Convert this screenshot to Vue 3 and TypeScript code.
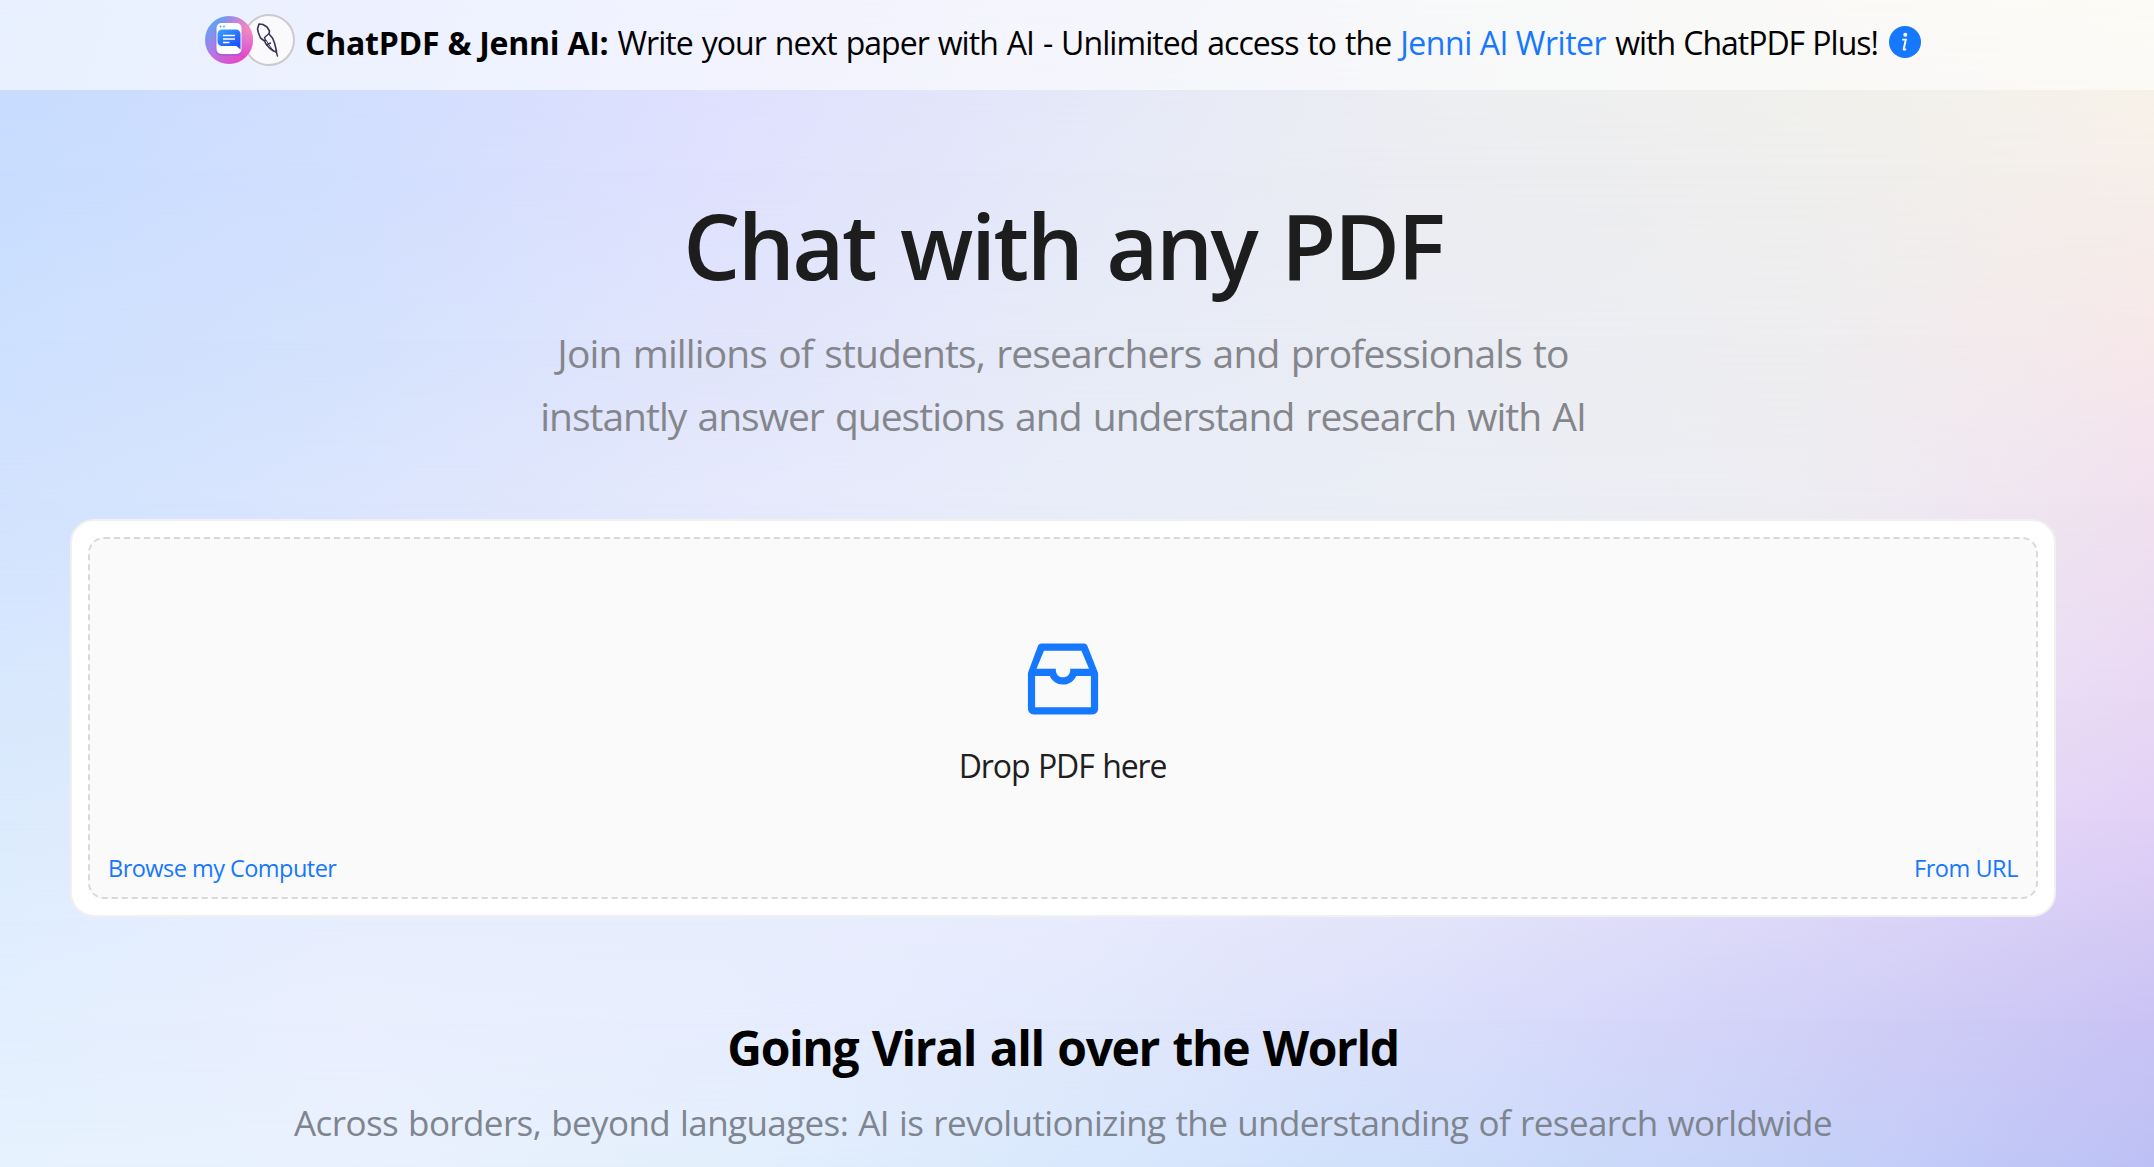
<script setup lang="ts">
interface Band { y: number; colors: string[] }

// Rows of the page's colour mesh; columns are spread evenly from left to right.
const bands: Band[] = [
  { y: 0, colors: ['#c6dbff', '#d2ddfe', '#dee0fe', '#e5e7f9', '#edeff2', '#f2f1ec', '#f7f5e8'] },
  { y: 170, colors: ['#c8ddff', '#d2dffe', '#dfe1fe', '#e6e9f8', '#ecedf1', '#efefee', '#f6efe9'] },
  { y: 340, colors: ['#cde1fe', '#d5e2fd', '#e1e5fc', '#e7ebf7', '#ebedf4', '#eeeef0', '#f7e8ea'] },
  { y: 500, colors: ['#d2e3fe', '#dbe5fd', '#e5e9fc', '#e8edf9', '#ebeef5', '#ededf2', '#f1e1ef'] },
  { y: 700, colors: ['#d9e8fd', '#e0e8fd', '#e7ebfd', '#e8edfb', '#e9ebf8', '#ebe6f6', '#e9d8f4'] },
  { y: 820, colors: ['#dcebfd', '#e5ebfe', '#e9edfe', '#e8edfc', '#e8e8fb', '#e6dff8', '#e2d0f6'] },
  { y: 920, colors: ['#dfedfe', '#e8eefe', '#e8eefe', '#e7ebfc', '#e3e3fb', '#dcd8f8', '#d5caf5'] },
  { y: 1020, colors: ['#e3effe', '#eaeffe', '#e8eefe', '#e2e9fc', '#dadffb', '#d2d1f8', '#cac3f4'] },
  { y: 1167, colors: ['#e6f2fe', '#e9f1fe', '#e3effc', '#d9e8fd', '#cfdefa', '#c6d2f8', '#bcc0f5'] },
]

const bandStyle = (i: number) => {
  const fade = i === 0
    ? 'none'
    : `linear-gradient(transparent ${bands[i - 1].y}px, #000 ${bands[i].y}px)`
  return {
    backgroundImage: `linear-gradient(90deg, ${bands[i].colors.join(', ')})`,
    maskImage: fade,
  }
}
</script>

<template>
  <div class="page">
    <div class="backdrop">
      <div v-for="(band, i) in bands" :key="band.y" class="band" :style="bandStyle(i)"></div>
    </div>

    <header class="banner">
      <svg class="logos" width="92" height="54" viewBox="0 0 92 54">
        <defs>
          <linearGradient id="badge" x1="0.1" y1="0.1" x2="0.8" y2="0.9">
            <stop offset="0" stop-color="#56a8f5" />
            <stop offset="0.5" stop-color="#b478e4" />
            <stop offset="1" stop-color="#e845c8" />
          </linearGradient>
          <radialGradient id="glow" cx="0.95" cy="0.25" r="0.6">
            <stop offset="0" stop-color="#fb8bbb" />
            <stop offset="1" stop-color="#f080cc" stop-opacity="0" />
          </radialGradient>
          <linearGradient id="bubble" x1="0" y1="0" x2="0.7" y2="1">
            <stop offset="0" stop-color="#37a5ff" />
            <stop offset="1" stop-color="#1d4cff" />
          </linearGradient>
        </defs>
        <circle cx="65" cy="27" r="25" fill="#fafafd" stroke="#cbcbcb" stroke-width="2" />
        <g fill="none" stroke="#3b3358" stroke-width="1.600" stroke-linejoin="round" stroke-linecap="round">
          <path d="M55 11l4 .5 4 2.500 2.500 4-.5 3 3.500 4 2 5 1.500 6 .5 3-3-1-4-3-3.500-4-1.500-3-4-3-2-5-1-4z" />
          <path d="M64.500 21l-4 3.500 1 3M66.500 30l-4 2M72 38l1.500 5" stroke-width="1.400" />
          <path d="M62 27l3 5 3 4 3 3" stroke-width="1" />
        </g>
        <circle cx="25" cy="27" r="24" fill="url(#badge)" />
        <circle cx="25" cy="27" r="24" fill="url(#glow)" />
        <rect x="11.500" y="11" width="26" height="32" rx="5" fill="#6a4fd0" opacity="0.25" />
        <rect x="12.500" y="10" width="25" height="31" rx="5" fill="#fff" />
        <path d="M18 16.500h14a4.500 4.500 0 0 1 4.500 4.500v15.500l-4-3.500H18a4.500 4.500 0 0 1-4.500-4.500V21a4.500 4.500 0 0 1 4.500-4.500z" fill="url(#bubble)" />
        <path d="M19 22.500h12M19 26h12M19 29.500h6.500" stroke="#fff" stroke-width="1.400" />
        <circle cx="16.500" cy="13.500" r="0.900" fill="#45a0ff" />
        <circle cx="20" cy="13.500" r="0.900" fill="#45a0ff" />
      </svg>
      <div class="notice">
        <b class="lead">ChatPDF &amp; Jenni AI:</b>
        <span class="n1">Write your next paper with AI - Unlimited access to the</span>
        <a class="n2">Jenni AI Writer</a>
        <span class="n3">with ChatPDF Plus!</span>
      </div>
      <svg class="info" width="32" height="32" viewBox="0 0 32 32">
        <circle cx="16" cy="16" r="16" fill="#1677ff" />
        <circle cx="16.300" cy="8.700" r="2" fill="#fff" />
        <path d="M13.200 13.600h3.600l-2 9.200c-.3 1.600.8 1.300 2.200.2" fill="none" stroke="#fff" stroke-width="1.900" />
      </svg>
    </header>

    <main class="content">
      <h1><span>Chat with any PDF</span></h1>
      <p class="subtitle">
        <span class="s1">Join millions of students, researchers and professionals to</span><br />
        <span class="s2">instantly answer questions and understand research with AI</span>
      </p>

      <section class="card">
        <div class="dropzone">
          <div class="drop">
            <svg class="inbox" width="96" height="96" viewBox="0 0 1024 1024" fill="#1677ff">
              <path d="M885.200 446.300l-.2-.8-112.200-285.100c-5-16.100-19.900-27.200-36.800-27.200H281.200c-17 0-32.100 11.300-36.900 27.600L139.400 443l-.3.700-.2.800c-1.300 4.900-1.700 9.900-1 14.800-.1 1.600-.2 3.200-.2 4.800V830a60.900 60.900 0 0 0 60.800 60.800h627.200c33.500 0 60.800-27.300 60.900-60.800V464.100c0-1.300 0-2.600-.1-3.700.4-4.900 0-9.600-1.300-14.100zm-295.800-43l-.3 15.700c-.8 44.900-31.800 75.100-77.100 75.100-22.100 0-41.100-7.100-54.800-20.600S436 441.200 435.600 419l-.3-15.700H229.500L309 210h399.200l81.700 193.300H589.400zm-375 76.800h157.300c24.300 57.100 76 90.800 140.400 90.800 33.700 0 65-9.400 90.300-27.200 22.200-15.600 39.500-37.400 50.700-63.600h156.500V814H214.400V480.100z" />
            </svg>
            <p class="drop-label"><span>Drop PDF here</span></p>
          </div>
          <div class="actions">
            <a class="browse">Browse my Computer</a>
            <a class="url">From URL</a>
          </div>
        </div>
      </section>

      <h2><span>Going Viral all over the World</span></h2>
      <p class="tagline"><span>Across borders, beyond languages: AI is revolutionizing the understanding of research worldwide</span></p>
    </main>
  </div>
</template>

<style>
body {
  margin: 0;
  overflow: hidden;
}
</style>

<style scoped>
.page {
  position: relative;
  box-sizing: border-box;
  width: 2154px;
  height: 1167px;
  overflow: hidden;
  font-family: 'Segoe UI', 'Open Sans', 'Noto Sans', sans-serif;
  color: #000;
  white-space: nowrap;
}
.backdrop,
.band {
  position: absolute;
  inset: 0;
}
.content {
  position: relative;
  width: 2126px;
  display: flex;
  flex-direction: column;
  align-items: center;
}
.banner {
  position: relative;
  box-sizing: border-box;
  height: 90px;
  padding-left: 204px;
  display: flex;
  align-items: flex-start;
  background: rgba(255, 255, 255, 0.6);
}
.logos {
  flex: none;
  margin-top: 13px;
}
.notice {
  display: flex;
  gap: 9px;
  width: 1574px;
  margin-left: 9px;
  padding-top: 20px;
  font-size: 32px;
  line-height: 46px;
}
.lead {
  font-weight: 700;
  letter-spacing: -0.240px;
}
.n1 {
  letter-spacing: -0.945px;
  word-spacing: 1.500px;
}
.n2 {
  letter-spacing: -0.450px;
}
.n3 {
  letter-spacing: -1.030px;
  word-spacing: 1px;
}
a {
  color: #1677ff;
}
.info {
  flex: none;
  margin: 26px 0 0 10px;
}
h1,
h2,
p {
  margin: 0;
}
h1 {
  margin-top: 89px;
  font-size: 90px;
  line-height: 132px;
  font-weight: 600;
  letter-spacing: -2.500px;
  word-spacing: 4px;
  color: #1d1d1e;
}
.subtitle {
  margin-top: 10px;
  font-size: 39px;
  line-height: 63px;
  text-align: center;
  color: #85868b;
}
.s1 {
  letter-spacing: -0.890px;
  word-spacing: 2px;
}
.s2 {
  letter-spacing: -0.990px;
  word-spacing: 2px;
}
.card {
  box-sizing: border-box;
  width: 1986px;
  height: 398px;
  margin-top: 72px;
  padding: 16px;
  border: 2px solid #f0f0f0;
  border-radius: 24px;
  background: #fff;
}
.dropzone {
  box-sizing: border-box;
  height: 362px;
  padding: 0 18px 10px;
  display: flex;
  flex-direction: column;
  border: 2px dashed #d9d9d9;
  border-radius: 16px;
  background: #fafafa;
}
.drop {
  flex: 1;
  display: flex;
  flex-direction: column;
  align-items: center;
  padding: 92px 1px 0 0;
}
.inbox {
  width: 96px;
  height: 96px;
}
.drop-label {
  margin-top: 15px;
  font-size: 32px;
  line-height: 48px;
  letter-spacing: -1.150px;
  word-spacing: 1.500px;
  color: #1f1f1f;
}
.actions {
  display: flex;
  justify-content: space-between;
  font-size: 23.500px;
  line-height: 38px;
}
.browse {
  letter-spacing: -0.530px;
}
.url {
  letter-spacing: -0.450px;
}
h2 {
  margin-top: 98px;
  font-size: 48px;
  line-height: 66px;
  font-weight: 700;
  letter-spacing: -1.390px;
  word-spacing: 2.500px;
}
.tagline {
  margin-top: 13px;
  font-size: 35px;
  line-height: 58px;
  color: #7f858f;
  letter-spacing: -0.600px;
  word-spacing: 1.500px;
}
</style>
